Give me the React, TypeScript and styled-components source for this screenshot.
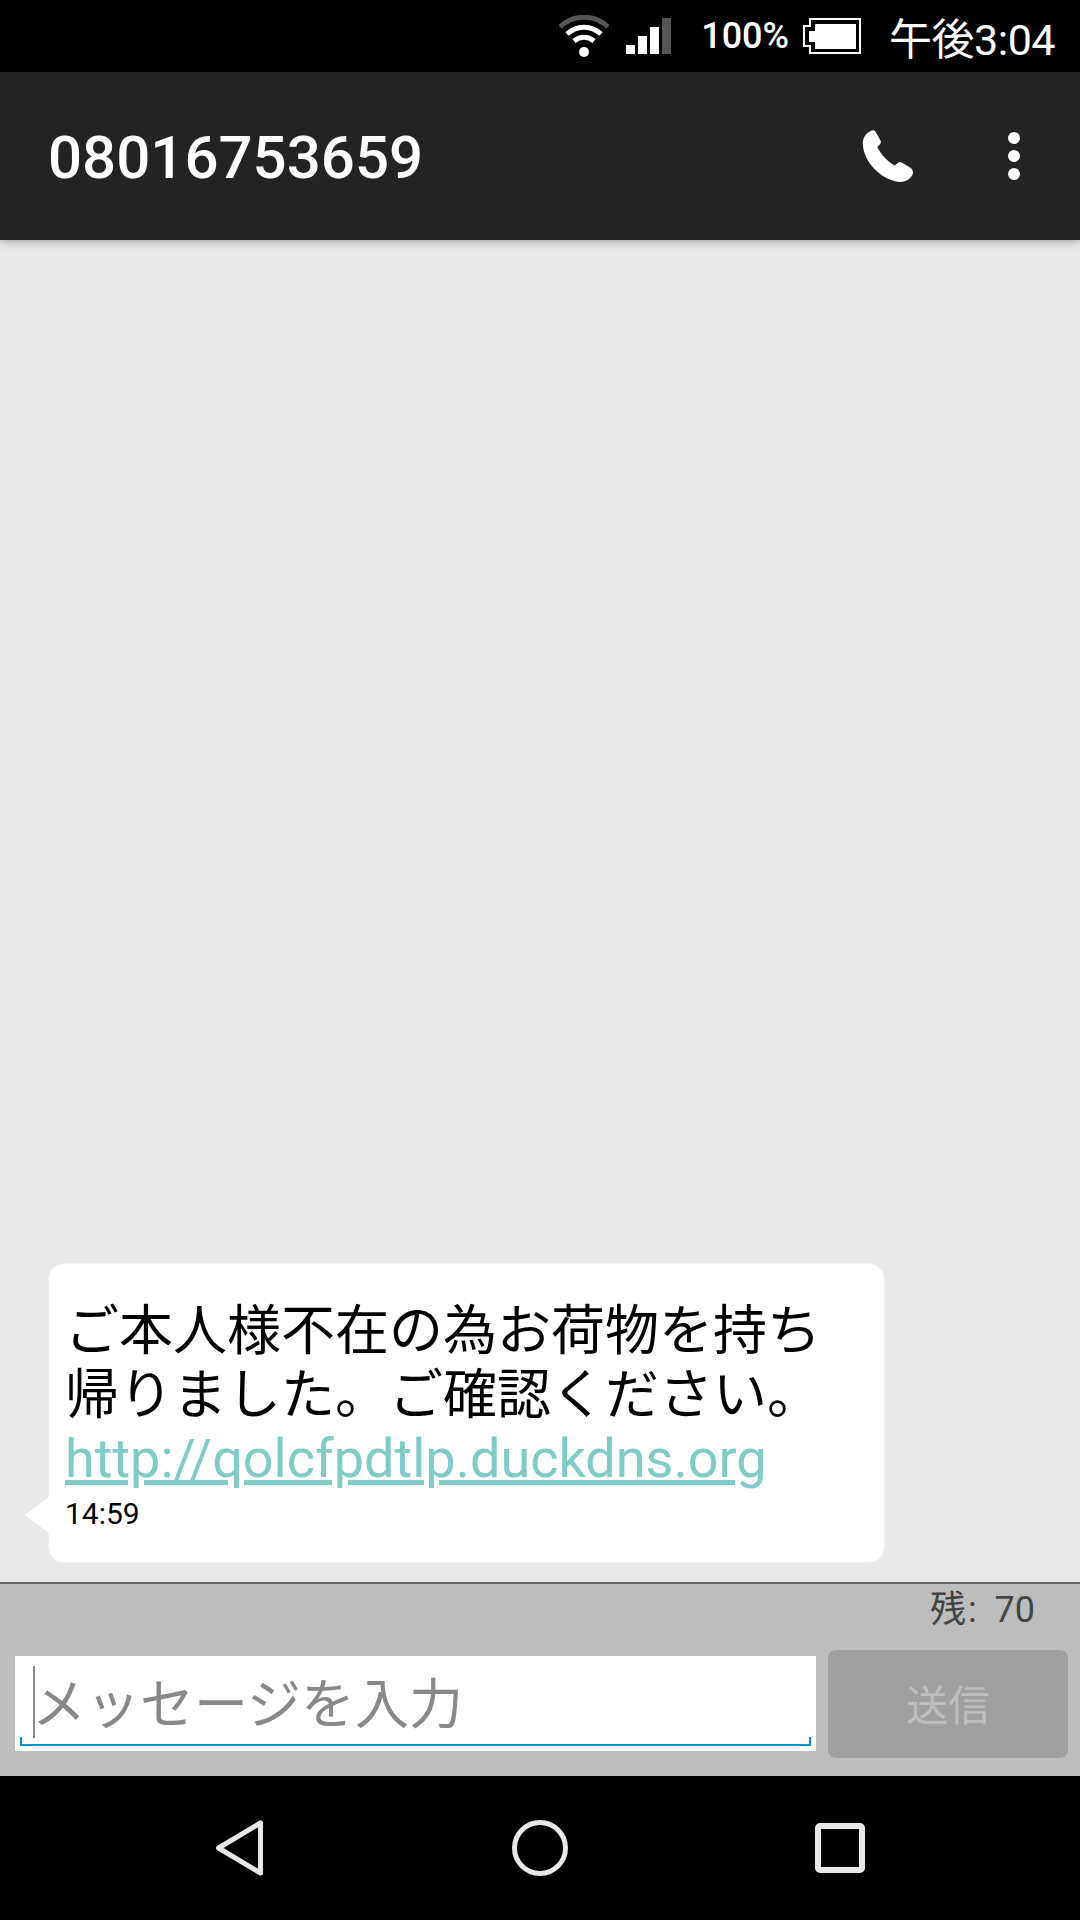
import React from "react";
import styled, { createGlobalStyle } from "styled-components";

const GlobalStyle = createGlobalStyle`
  html, body {
    margin: 0;
    padding: 0;
    background: #000;
  }
  * {
    box-sizing: border-box;
  }
`;

const Screen = styled.div`
  width: 1080px;
  height: 1920px;
  display: flex;
  flex-direction: column;
  overflow: hidden;
  font-family: Roboto, "Noto Sans CJK JP", sans-serif;
  background: #e9e9e9;
`;

const StatusBar = styled.div`
  height: 72px;
  flex: none;
  display: flex;
  align-items: center;
  justify-content: flex-end;
  padding-right: 25px;
  background: #000;
  color: #fff;
`;

const WifiIcon = styled.svg`
  width: 50px;
  height: 42px;
  margin-right: 17px;
`;

const SignalIcon = styled.svg`
  width: 45px;
  height: 36px;
  margin-right: 30px;
`;

const BatteryText = styled.span`
  font-size: 36px;
  font-weight: 500;
  margin-right: 14px;
`;

const BatteryIcon = styled.svg`
  width: 58px;
  height: 36px;
  margin-right: 28px;
`;

const Clock = styled.span`
  font-size: 43px;
  letter-spacing: -0.5px;
`;

const AppBar = styled.header`
  height: 168px;
  flex: none;
  display: flex;
  align-items: center;
  padding: 0 48px;
  background: #232323;
  color: #fff;
  box-shadow: 0 2px 8px rgba(0, 0, 0, 0.3);
  position: relative;
  z-index: 1;
`;

const Title = styled.h1`
  flex: 1;
  margin: 4px 0 0;
  font-size: 60px;
  font-weight: 500;
  line-height: 1;
`;

const PhoneIcon = styled.svg`
  width: 52px;
  height: 52px;
  margin-right: 94px;
`;

const MenuIcon = styled.svg`
  width: 12px;
  height: 48px;
  margin-right: 12px;
`;

const Thread = styled.main`
  flex: 1;
  display: flex;
  flex-direction: column;
  justify-content: flex-end;
  padding: 0 195px 19px 48px;
`;

const Bubble = styled.div`
  position: relative;
  height: 300px;
  padding: 36px 16px 0;
  background: #fff;
  border: 1px solid #f2f2f2;
  border-radius: 16px;

  &::before {
    content: "";
    position: absolute;
    left: -24px;
    top: 233px;
    width: 24px;
    height: 36px;
    background: #fff;
    clip-path: polygon(100% 0, 0 50%, 100% 100%);
  }
`;

const MessageText = styled.div`
  font-size: 54px;
  line-height: 64px;
  color: #000;
`;

const MessageLink = styled.a`
  display: block;
  margin-top: -3px;
  font-size: 54px;
  line-height: 68px;
  color: #80cbc4;
  text-decoration: underline;
`;

const Timestamp = styled.div`
  margin-top: 3px;
  font-size: 30px;
  line-height: 36px;
  color: #000;
`;

const Composer = styled.section`
  height: 194px;
  flex: none;
  padding: 0 12px 0 15px;
  background: #bdbdbd;
  border-top: 2px solid #666;
`;

const Counter = styled.div`
  height: 66px;
  padding: 4px 33px 0 0;
  text-align: right;
  font-size: 36px;
  line-height: 44px;
  color: #444;
`;

const CounterLabel = styled.span`
  margin-right: 2px;
`;

const InputRow = styled.div`
  display: flex;
  align-items: flex-start;
  gap: 12px;
`;

const InputBox = styled.div`
  width: 801px;
  height: 95px;
  margin-top: 6px;
  padding: 10px 5px 5px;
  background: #fff;
`;

const InputField = styled.div`
  height: 80px;
  display: flex;
  align-items: center;
  padding: 0 0 10px 13px;
  position: relative;
  border-bottom: 2px solid #0099cc;
  font-size: 54px;
  color: #888;

  &::before,
  &::after {
    content: "";
    position: absolute;
    bottom: 0;
    width: 2px;
    height: 7px;
    background: #0099cc;
  }
  &::before {
    left: 0;
  }
  &::after {
    right: 0;
  }
`;

const Caret = styled.span`
  align-self: flex-start;
  width: 2px;
  height: 72px;
  margin-right: -3px;
  background: #888;
`;

const SendButton = styled.div`
  width: 240px;
  height: 108px;
  display: flex;
  align-items: center;
  justify-content: center;
  padding-bottom: 4px;
  border-radius: 8px;
  background: #a0a0a0;
  color: #bdbdbd;
  font-size: 42px;
`;

const NavBar = styled.nav`
  height: 144px;
  flex: none;
  display: flex;
  align-items: center;
  padding: 0 0 0 216px;
  background: #000;
`;

const NavIcon = styled.svg<{ $size: number; $gap: number }>`
  width: ${(p) => p.$size}px;
  height: ${(p) => (p.$size < 50 ? 56 : p.$size)}px;
  margin-right: ${(p) => p.$gap}px;
`;

export default function App() {
  return (
    <Screen>
      <GlobalStyle />
      <StatusBar>
        <WifiIcon viewBox="0 0 50 42">
          <path d="M1 12C14 -1 36 -1 49 12" fill="none" stroke="#555" strokeWidth="5" />
          <path d="M8 19C18 10 32 10 42 19" fill="none" stroke="#fff" strokeWidth="5" />
          <path d="M15 26C21 21 29 21 35 26" fill="none" stroke="#fff" strokeWidth="5" />
          <circle cx="25" cy="37" r="5" fill="#fff" />
        </WifiIcon>
        <SignalIcon viewBox="0 0 45 36">
          <rect x="0" y="27" width="9" height="9" fill="#fff" />
          <rect x="12" y="18" width="9" height="18" fill="#fff" />
          <rect x="24" y="9" width="9" height="27" fill="#fff" />
          <rect x="36" y="0" width="9" height="36" fill="#555" />
        </SignalIcon>
        <BatteryText>100%</BatteryText>
        <BatteryIcon viewBox="0 0 58 36">
          <path
            d="M7 1H57V35H7V28H1V8H7Z"
            fill="none"
            stroke="#fff"
            strokeWidth="2"
          />
          <path d="M12 6H53V31H12V24H6V13H12Z" fill="#fff" />
        </BatteryIcon>
        <Clock>午後3:04</Clock>
      </StatusBar>
      <AppBar>
        <Title>08016753659</Title>
        <PhoneIcon viewBox="0 0 50.5 52">
          <path
            fill="#fff"
            d="M8 1C10 -0.5 12 0 13 2L18 11C18.5 12.5 18 13.5 17 14.5L14.5 17C18 24 24 31 32 35.5L35 33C36 32 37.5 31.5 39 32.5L48 38C50 39.5 50.5 42 50 44C48 49 43 52 37 52C18 50 1 32 0 14C0 8 3 3 8 1Z"
          />
        </PhoneIcon>
        <MenuIcon viewBox="0 0 12 48">
          <circle cx="6" cy="6" r="6" fill="#fff" />
          <circle cx="6" cy="24" r="6" fill="#fff" />
          <circle cx="6" cy="42" r="6" fill="#fff" />
        </MenuIcon>
      </AppBar>
      <Thread>
        <Bubble>
          <MessageText>ご本人様不在の為お荷物を持ち帰りました。ご確認ください。</MessageText>
          <MessageLink>http://qolcfpdtlp.duckdns.org</MessageLink>
          <Timestamp>14:59</Timestamp>
        </Bubble>
      </Thread>
      <Composer>
        <Counter>
          <CounterLabel>残</CounterLabel>:&nbsp;&nbsp;70
        </Counter>
        <InputRow>
          <InputBox>
            <InputField>
              <Caret />
              メッセージを入力
            </InputField>
          </InputBox>
          <SendButton>送信</SendButton>
        </InputRow>
      </Composer>
      <NavBar>
        <NavIcon $size={48} $gap={248} viewBox="0 0 48 56">
          <path
            d="M44.5 3V53L2.5 28Z"
            fill="none"
            stroke="#e8e8e8"
            strokeWidth="5"
            strokeLinejoin="round"
          />
        </NavIcon>
        <NavIcon $size={56} $gap={247} viewBox="0 0 56 56">
          <circle cx="28" cy="28" r="25.5" fill="none" stroke="#e8e8e8" strokeWidth="5" />
        </NavIcon>
        <NavIcon $size={50} $gap={0} viewBox="0 0 50 50">
          <rect
            x="3"
            y="3"
            width="44"
            height="44"
            rx="2"
            fill="none"
            stroke="#e8e8e8"
            strokeWidth="6"
          />
        </NavIcon>
      </NavBar>
    </Screen>
  );
}
